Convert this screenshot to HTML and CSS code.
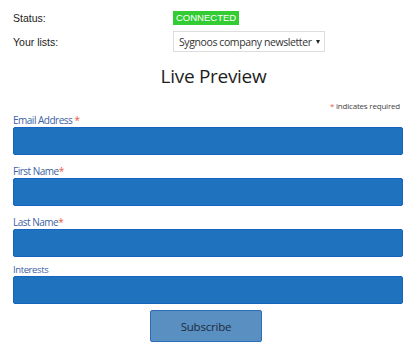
FILE: index.html
```html
<!DOCTYPE html>
<html lang="en">

<head>
    <meta charset="UTF-8">
    <meta name="viewport" content="width=device-width, initial-scale=1.0">
    <title>Live Preview</title>
    <link rel="stylesheet" href="styles.css">
</head>

<body>
    <div class="settings">
        <div class="row">
            <span class="row-label">Status:</span>
            <span class="badge">CONNECTED</span>
        </div>
        <div class="row">
            <span class="row-label">Your lists:</span>
            <div class="select">
                <span>Sygnoos company newsletter</span>
                <span class="arrow"></span>
            </div>
        </div>
    </div>

    <h2 class="title">Live Preview</h2>

    <form class="signup">
        <div class="required-note"><span class="asterisk">*</span> indicates required</div>

        <label class="label" for="email">Email Address <span class="asterisk">*</span></label>
        <input class="input" type="email" id="email">

        <label class="label" for="fname">First Name<span class="asterisk">*</span></label>
        <input class="input" type="text" id="fname">

        <label class="label" for="lname">Last Name<span class="asterisk">*</span></label>
        <input class="input" type="text" id="lname">

        <label class="label label-small" for="interests">Interests</label>
        <input class="input" type="text" id="interests">

        <div class="actions">
            <button class="button" type="submit">Subscribe</button>
        </div>
    </form>
</body>
</html>
```

FILE: styles.css
```css
* {
    box-sizing: border-box;
}

body {
    margin: 0;
    background-color: #fff;
    font-family: "Open Sans", sans-serif;
    color: #222;
}

/* top settings table */
.settings {
    padding: 11px 13px 0;
    font-family: "Liberation Sans", Arial, sans-serif;
    font-size: 10.5px;
    color: #222;
}

.row {
    display: flex;
    align-items: center;
}

.row + .row {
    margin-top: 6px;
}

.row-label {
    width: 160px;
}

.badge {
    background-color: #33cc33;
    color: #fff;
    font-size: 9.5px;
    line-height: 14px;
    padding: 0 3px;
}

.select {
    display: flex;
    align-items: center;
    justify-content: space-between;
    width: 152px;
    height: 21px;
    padding: 0 4px 0 5px;
    border: 1px solid #ddd;
    font-family: "Open Sans", sans-serif;
    font-size: 10.5px;
    letter-spacing: -0.4px;
    white-space: nowrap;
    color: #333;
}

.arrow {
    width: 0;
    height: 0;
    border-left: 2.5px solid transparent;
    border-right: 2.5px solid transparent;
    border-top: 4px solid #222;
}

.title {
    margin: 10px 0 0;
    padding-left: 8px;
    text-align: center;
    font-size: 19px;
    letter-spacing: -0.3px;
    font-weight: 400;
    line-height: 28px;
    color: #1e1e1e;
}

/* form */
.signup {
    padding: 0 16px 0 13px;
}

.required-note {
    text-align: right;
    font-size: 8px;
    letter-spacing: -0.2px;
    line-height: 12px;
    margin-top: 10px;
    padding-right: 3px;
    color: #444;
}

.asterisk {
    color: #e85c41;
}

.label {
    display: block;
    font-size: 10px;
    letter-spacing: -0.5px;
    line-height: 14px;
    margin-top: 9px;
    color: #3c5fa5;
}

.required-note + .label {
    margin-top: 1px;
}

.label-small {
    font-size: 9.5px;
    letter-spacing: -0.4px;
    line-height: 12px;
    margin-top: 7px;
}

.input {
    display: block;
    width: 100%;
    height: 28px;
    border: 1px solid #1565c0;
    border-radius: 2px;
    background-color: #1f72bd;
    appearance: none;
}

.actions {
    display: flex;
    justify-content: center;
    margin-top: 6px;
    padding-right: 4px;
}

.button {
    width: 112px;
    height: 32px;
    border: 1px solid #2c6cb8;
    border-radius: 2px;
    background-color: #5a8fc2;
    color: #1c2b3c;
    font-family: "Open Sans", sans-serif;
    font-size: 11.5px;
    letter-spacing: -0.2px;
    cursor: pointer;
}
```
